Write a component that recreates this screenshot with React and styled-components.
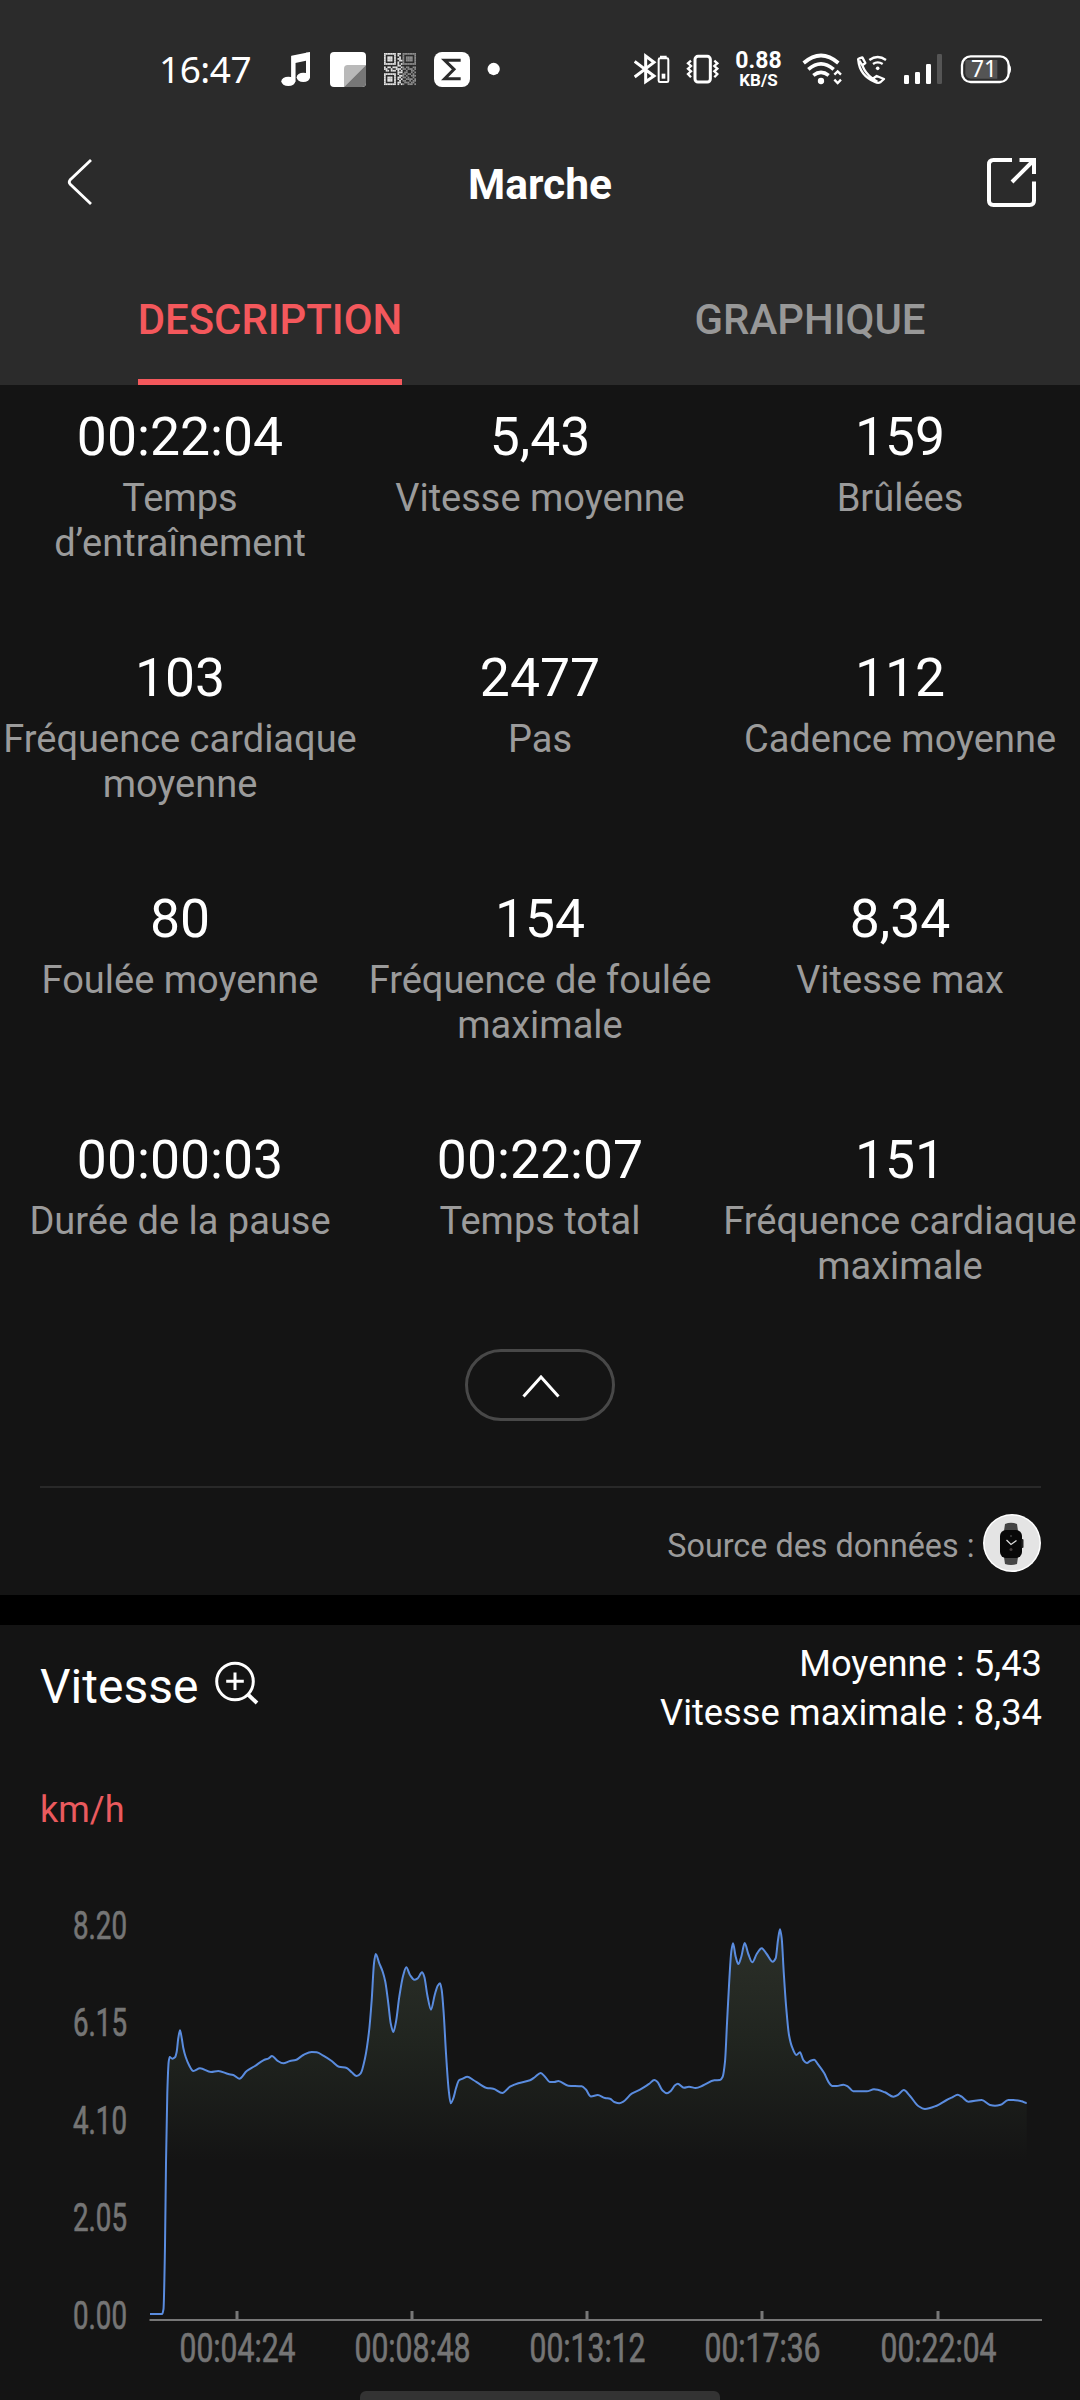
import React from "react";
import styled, { createGlobalStyle } from "styled-components";

const GlobalStyle = createGlobalStyle`
  html, body { margin: 0; padding: 0; background: #141414; }
  *, *::before, *::after { box-sizing: border-box; }
`;

const colors = {
  header: "#2b2b2b",
  body: "#141414",
  accent: "#f4585c",
  muted: "#9b9b9b",
  axis: "#757575",
};

const Screen = styled.div`
  width: 1080px;
  height: 2400px;
  overflow: hidden;
  display: flex;
  flex-direction: column;
  background: ${colors.body};
  color: #fff;
  font-family: Roboto, "Liberation Sans", sans-serif;
`;

const Header = styled.header`
  height: 385px;
  flex: none;
  display: flex;
  flex-direction: column;
  background: ${colors.header};
`;

const StatusBar = styled.div`
  height: 140px;
  padding: 50px 68px 50px 159px;
  display: flex;
  justify-content: space-between;
`;

const StatusGroup = styled.div`
  display: flex;
  height: 40px;
`;

const Clock = styled.div`
  width: 121px;
  font: 400 37px/38px "Noto Sans", "Open Sans", sans-serif;
  letter-spacing: -0.5px;
  white-space: nowrap;
`;

const StatusSvg = styled.svg`
  flex: none;
  display: block;
  height: 40px;
  margin-left: ${(p) => p.$before}px;
`;

const NetSpeed = styled.div`
  width: 49px;
  margin-left: 15px;
  display: flex;
  flex-direction: column;
  align-items: center;
  font-weight: 700;
  white-space: nowrap;
`;

const SpeedValue = styled.span`
  font-size: 23px;
  line-height: 22px;
`;

const SpeedUnit = styled.span`
  font-size: 17px;
  line-height: 16px;
`;

const TitleBar = styled.div`
  height: 90px;
  padding: 0 40px 0 64px;
  display: grid;
  grid-template-columns: 100px 1fr 100px;
  align-items: center;
`;

const Title = styled.h1`
  margin: 0;
  padding: 0 24px 0 0;
  text-align: center;
  font-size: 42.5px;
  line-height: 50px;
  font-weight: 700;
`;

const IconButton = styled.button`
  padding: 0 0 6px;
  border: 0;
  background: none;
  color: #fff;
  display: flex;
  justify-content: ${(p) => (p.$end ? "flex-end" : "flex-start")};
`;

const Tabs = styled.nav`
  flex: 1;
  display: grid;
  grid-template-columns: 1fr 1fr;
  justify-items: center;
`;

const Tab = styled.div`
  height: 155px;
  padding-top: 65px;
  font-size: 41.9px;
  line-height: 50px;
  font-weight: 500;
  color: ${(p) => (p.$active ? colors.accent : "#989898")};
  border-bottom: 6px solid ${(p) => (p.$active ? colors.accent : "transparent")};
`;

const Summary = styled.section`
  height: 1210px;
  flex: none;
  display: flex;
  flex-direction: column;
  align-items: center;
`;

const Stats = styled.div`
  width: 100%;
  padding-top: 20px;
  display: grid;
  grid-template-columns: repeat(3, 360px);
  grid-auto-rows: 241px;
`;

const Stat = styled.div`
  display: flex;
  flex-direction: column;
  align-items: center;
`;

const StatValue = styled.div`
  font-size: 53.5px;
  line-height: 64px;
`;

const StatLabel = styled.div`
  margin-top: 7px;
  font-size: 38px;
  line-height: 44.5px;
  color: ${colors.muted};
  text-align: center;
  white-space: pre;
`;

const Collapse = styled.button`
  flex: none;
  width: 150px;
  height: 72px;
  margin-top: -20px;
  padding: 2px 0 0 1px;
  border: 3px solid #484848;
  border-radius: 36px;
  background: none;
  color: #fff;
  display: flex;
  align-items: center;
  justify-content: center;
`;

const Source = styled.div`
  width: 1001px;
  height: 108px;
  margin-top: 65px;
  padding-top: 26px;
  border-top: 2px solid #292929;
  display: flex;
  justify-content: flex-end;
  align-items: flex-start;
`;

const SourceText = styled.span`
  padding-top: 12px;
  margin-right: 8px;
  font-size: 32.3px;
  line-height: 40px;
  color: ${colors.muted};
`;

const Separator = styled.div`
  height: 30px;
  flex: none;
  background: #000;
`;

const Speed = styled.section`
  height: 775px;
  flex: none;
  display: flex;
  flex-direction: column;
`;

const SpeedHead = styled.div`
  height: 160px;
  flex: none;
  padding: 14px 38px 0 40px;
  display: flex;
  justify-content: space-between;
`;

const SpeedTitle = styled.h2`
  margin: 0;
  padding-top: 18px;
  height: 78px;
  display: flex;
  gap: 16px;
  font-size: 48px;
  line-height: 60px;
  font-weight: 400;
`;

const MagnifySvg = styled.svg`
  display: block;
  margin-top: 4px;
`;

const SpeedFigures = styled.div`
  text-align: right;
  font-size: 36.3px;
  line-height: 49px;
`;

const Unit = styled.div`
  height: 95px;
  flex: none;
  padding-left: 40px;
  font-size: 36px;
  line-height: 50px;
  color: #ea5a5e;
`;

const ChartSvg = styled.svg`
  display: block;
  width: 1080px;
  height: 511px;
  flex: none;
`;

const AxisText = styled.text`
  fill: ${colors.axis};
  stroke: ${colors.axis};
  stroke-width: 0.7px;
  font-family: Roboto, sans-serif;
  font-size: ${(p) => p.$size}px;
`;

const HomeBar = styled.div`
  width: 360px;
  height: 9px;
  flex: none;
  align-self: center;
  border-radius: 6px 6px 0 0;
  background: #333;
`;

/* Status glyphs are drawn at three units per pixel. */
function Glyph({ x, w, before = 0, children }) {
  return (
    <StatusSvg $before={before} width={w / 3} viewBox={`${x} 60 ${w} 120`} fill="none">
      {children}
    </StatusSvg>
  );
}

const QR = [
  "1111111011011111111",
  "1000001010010000001",
  "1011101001010111101",
  "1011101011010111101",
  "1011101001110111101",
  "1000001010010000001",
  "1111111010111111111",
  "0000000011000000000",
  "1011011100110110011",
  "1100100111011011101",
  "0110111010100100110",
  "0000000011101100101",
  "1111111010011011010",
  "1000001001110100111",
  "1011101011011010010",
  "1011101010100111101",
  "1011101001011001011",
  "1000001011001110110",
  "1111111010110011101",
];

function QrGlyph() {
  const u = 96 / 19;
  return (
    <Glyph x={732} w={96} before={18}>
      {QR.flatMap((row, r) =>
        [...row].map((c, i) =>
          c === "1" ? (
            <rect
              key={`${r}-${i}`}
              x={732 + i * u}
              y={69 + r * u}
              width={u + 0.2}
              height={u + 0.2}
              fill={i > 10 ? "#8c8c8c" : "#e4e4e4"}
            />
          ) : null
        )
      )}
    </Glyph>
  );
}

function StatusIconsLeft() {
  return (
    <>
      <Glyph x={420} w={96}>
        <path d="M454 77 L510 66 V100 L498 92 L466 99 V154 H454 Z" fill="#fff" />
        <rect x="498" y="68" width="12" height="74" fill="#fff" />
        <rect x="454" y="78" width="12" height="76" fill="#fff" />
        <ellipse cx="445" cy="154" rx="21" ry="14" fill="#fff" />
        <ellipse cx="490" cy="142" rx="20" ry="14" fill="#fff" />
      </Glyph>
      <Glyph x={570} w={108} before={18}>
        <rect x="570" y="66" width="108" height="105" rx="12" fill="#fff" />
        <path d="M612 171 V116 Q612 105 623 105 H678 Z" fill="#b9b9b9" />
        <path d="M678 105 V159 Q678 171 666 171 H612 Z" fill="#777" />
      </Glyph>
      <QrGlyph />
      <Glyph x={882} w={108} before={18}>
        <rect x="882" y="66" width="108" height="105" rx="24" fill="#fff" />
        <path d="M962 91 H914 L942 118 L914 146 H962" stroke="#2b2b2b" strokeWidth="9" />
      </Glyph>
      <Glyph x={1042} w={42} before={17}>
        <circle cx="1062" cy="117" r="18.5" fill="#fff" />
      </Glyph>
    </>
  );
}

function StatusIconsRight() {
  return (
    <>
      <Glyph x={102} w={108}>
        <path d="M104 94 L162 138 L137 155 V78 L162 97 L104 141" stroke="#fff" strokeWidth="9" />
        <path d="M183 84 V80 H197 V84" stroke="#fff" strokeWidth="6" />
        <rect x="176" y="85" width="29" height="71" rx="4" stroke="#fff" strokeWidth="6" />
        <rect x="185" y="131" width="11" height="15" fill="#fff" />
      </Glyph>
      <Glyph x={258} w={99} before={16}>
        <rect x="285" y="79" width="46" height="77" rx="9" stroke="#fff" strokeWidth="9" />
        <path d="M273 92 L264 100 L273 108 L264 116 L273 124 L264 132 L273 142" stroke="#fff" strokeWidth="7" />
        <path d="M343 92 L352 100 L343 108 L352 116 L343 124 L352 132 L343 142" stroke="#fff" strokeWidth="7" />
      </Glyph>
      <NetSpeed>
        <SpeedValue>0.88</SpeedValue>
        <SpeedUnit>KB/S</SpeedUnit>
      </NetSpeed>
      <Glyph x={606} w={123} before={19}>
        <path d="M611 99 Q663 54 715 99" stroke="#fff" strokeWidth="11" />
        <path d="M625 118 Q663 85 701 118" stroke="#fff" strokeWidth="11" />
        <path d="M640 136 Q663 118 686 136" stroke="#fff" strokeWidth="11" />
        <circle cx="663" cy="153" r="9.5" fill="#fff" />
        <path d="M703 134 L713 124 L723 134 M703 149 L713 159 L723 149" stroke="#fff" strokeWidth="7" />
      </Glyph>
      <Glyph x={768} w={96} before={13}>
        <path
          d="M775 91 Q773 86 778 85 L787 82 L796 99 L787 106 Q796 130 818 146 L830 138 L852 147 L842 156 Q835 161 825 156 Q779 136 775 91 Z M818 146 L832 155 M787 106 L778 92"
          stroke="#fff"
          strokeWidth="7"
          strokeLinejoin="round"
        />
        <path d="M808 90 Q833 72 858 90" stroke="#fff" strokeWidth="7" />
        <path d="M819 102 Q833 92 848 102" stroke="#fff" strokeWidth="7" />
        <circle cx="833" cy="115" r="5.5" fill="#fff" />
      </Glyph>
      <Glyph x={909} w={120} before={15}>
        <rect x="912" y="135" width="15" height="27" rx="4" fill="#fff" />
        <rect x="945" y="126" width="15" height="36" rx="4" fill="#fff" />
        <rect x="978" y="102" width="15" height="60" rx="4" fill="#fff" />
        <rect x="1011" y="72" width="15" height="90" rx="4" fill="#555" />
      </Glyph>
      <Glyph x={1080} w={156} before={17}>
        <path d="M1096 90 H1192 V146 H1112 Q1096 144 1096 130 Z" fill="#545454" />
        <rect x="1086" y="79" width="140" height="77" rx="26" stroke="#fff" strokeWidth="7" />
        <path d="M1226 103 Q1233 106 1233 118 Q1233 130 1226 133 Z" fill="#fff" />
        <text x="1152" y="142" textAnchor="middle" fill="#fff" fontFamily="Noto Sans, sans-serif" fontSize="68">71</text>
      </Glyph>
    </>
  );
}

function BackIcon() {
  return (
    <svg width="32" height="50" viewBox="0 0 32 50" fill="none">
      <path d="M27 3 L6 23 Q4.500 25 6 27 L27 47" stroke="#fff" strokeWidth="2.800" />
    </svg>
  );
}

function ShareIcon() {
  return (
    <svg width="56" height="54" viewBox="0 0 56 54" fill="none" stroke="#fff" strokeWidth="4">
      <path d="M28 5 H9.500 Q5 5 5 9.500 V45.500 Q5 50 9.500 50 H45.500 Q50 50 50 45.500 V26.500" />
      <path d="M35.500 5 H50 V19 M49 6 L28 27" />
    </svg>
  );
}

function WatchBadge() {
  return (
    <svg width="58" height="58" viewBox="0 0 58 58">
      <circle cx="29" cy="29" r="29" fill="#fff" />
      <circle cx="29" cy="29" r="27.500" fill="#e4e4e4" />
      <path d="M22 10 Q28 7.500 34 10 L35 17 H21 Z M21 43 H35 L34 50 Q28 52 22 50 Z" fill="#444" />
      <rect x="17" y="16" width="22" height="28" rx="6" fill="#080808" />
      <rect x="38.500" y="25" width="2" height="9" rx="1" fill="#222" />
      <path d="M23.500 26 L28 30.500 L33.500 26.500" fill="none" stroke="#ddd" strokeWidth="1.300" />
      <circle cx="28" cy="35.500" r="1.500" fill="#443c3c" />
      <circle cx="28" cy="22" r="0.800" fill="#666" />
    </svg>
  );
}

function MagnifyIcon() {
  return (
    <MagnifySvg width="46" height="46" viewBox="0 0 46 46" fill="none" stroke="#fff">
      <circle cx="21" cy="20.500" r="18.300" strokeWidth="3" />
      <path d="M34 33.500 L43 42" strokeWidth="3.800" />
      <path d="M21 11.500 V29 M12.200 20.300 H29.800" strokeWidth="3" />
    </MagnifySvg>
  );
}

const stats = [
  ["00:22:04", "Temps\nd’entraînement"],
  ["5,43", "Vitesse moyenne"],
  ["159", "Brûlées"],
  ["103", "Fréquence cardiaque\nmoyenne"],
  ["2477", "Pas"],
  ["112", "Cadence moyenne"],
  ["80", "Foulée moyenne"],
  ["154", "Fréquence de foulée\nmaximale"],
  ["8,34", "Vitesse max"],
  ["00:00:03", "Durée de la pause"],
  ["00:22:07", "Temps total"],
  ["151", "Fréquence cardiaque\nmaximale"],
];

const points = [
  [150, 434], [162, 434], [163.5, 429], [165, 366], [166, 283], [167.3, 213], [168.7, 181.7], [169.7, 177],
  [172.3, 178.7], [175, 177.3], [176.7, 171.7], [178.3, 158], [180, 150.3], [181.7, 158], [183.3, 168],
  [185.7, 177], [189, 185], [193.3, 191], [200, 188.3], [211, 192], [218.3, 191], [228.3, 194], [233.3, 195],
  [239.3, 198.7], [246.7, 191], [255, 186], [263.3, 180.3], [268.7, 178.3], [272, 176], [277.3, 180.7],
  [283.3, 183.3], [290, 181], [295.7, 180], [303.3, 175], [311.7, 172], [316.7, 172.3], [323.3, 175.7],
  [331.7, 181], [339, 186.7], [346.7, 188], [351.7, 192.3], [356.7, 196], [360.7, 193.3], [365, 178.3],
  [369, 151.7], [371.7, 120], [374, 83.3], [375.7, 74], [379.3, 83.3], [382.7, 91.7], [385.3, 101.7],
  [388.3, 123.3], [390.7, 143.3], [393.3, 152], [396, 141.7], [399.3, 116.7], [403.3, 95], [406.3, 87.3],
  [410, 95], [414.3, 99.7], [417.7, 98.3], [422, 92.3], [424.3, 96.7], [427.3, 115], [431, 129.7],
  [434.7, 115], [437.7, 105.7], [440, 103.3], [441.7, 110], [443.7, 133.3], [446, 173.3], [448.7, 210],
  [450.7, 223.3], [453.3, 218.3], [456, 208.3], [459, 200.3], [462.7, 198.7], [467.3, 196.7], [473.3, 200],
  [480, 204.3], [486.7, 208], [493.3, 208.7], [502.3, 213], [510, 206.7], [518.3, 203.3], [530, 200.3],
  [535, 197], [540.7, 193], [545, 196.7], [550, 202], [554.3, 202], [558.3, 201], [568.3, 205.7],
  [581.7, 206.3], [585.7, 209.3], [591, 216.5], [597.7, 215], [605, 218], [610, 218.7], [614.3, 222],
  [619.3, 223.3], [623.3, 221.7], [631.7, 213.7], [640, 209.7], [649.3, 203.7], [654.3, 200], [657.3, 201.7],
  [662.3, 210.3], [667, 213.3], [671, 210.7], [675, 205.3], [677.7, 203.7], [684, 207.7], [689, 206.7],
  [695.7, 208], [703.3, 205.3], [714.3, 200.3], [720, 200], [722.7, 196.7], [725, 181.7], [727, 143.3],
  [729.3, 100], [731.3, 71.7], [733, 63.3], [735.7, 76.7], [738.3, 84], [741.3, 76.7], [744.7, 63],
  [748.3, 74], [752.3, 82.3], [756.7, 74], [761.7, 68.3], [766.7, 74], [772.7, 81.7], [775.7, 78.3],
  [778, 60], [780, 49.3], [781.7, 58.3], [783.7, 91.7], [786, 125], [789, 155], [792.3, 167.7], [796.3, 175],
  [800, 172.3], [803.3, 180], [807, 183], [810, 181], [814.3, 179.7], [817.3, 183.3], [824.3, 193.3],
  [828.3, 201.7], [832.3, 206], [836.7, 206], [843.3, 204.7], [847.7, 206.3], [853.3, 211.3], [866.7, 211.3],
  [874, 209.3], [885, 212.3], [893.3, 216.7], [898.3, 214.7], [903.7, 210], [910, 216], [918.3, 226],
  [925, 229], [936.7, 225.7], [946.7, 220], [952.3, 217.3], [957.7, 214.7], [961.7, 216.7], [968.3, 221.7],
  [981.7, 220], [990, 225], [995, 225.7], [1000.7, 224.7], [1008.3, 220], [1013.3, 220], [1021.7, 221.3],
  [1026.7, 223],
];

/* Monotone cubic interpolation through the samples. */
function smoothPath(pts) {
  const slope = pts.slice(1).map((p, i) => (p[1] - pts[i][1]) / (p[0] - pts[i][0]));
  const tangent = pts.map((_, i) => {
    if (i === 0 || i === pts.length - 1) return 0;
    const a = slope[i - 1];
    const b = slope[i];
    return a * b <= 0 ? 0 : (2 * a * b) / (a + b);
  });
  return pts.slice(1).reduce((d, p, i) => {
    const q = pts[i];
    const h = (p[0] - q[0]) / 3;
    return `${d} C${q[0] + h} ${q[1] + tangent[i] * h} ${p[0] - h} ${p[1] - tangent[i + 1] * h} ${p[0]} ${p[1]}`;
  }, `M${pts[0][0]} ${pts[0][1]}`);
}

const yTicks = ["8.20", "6.15", "4.10", "2.05", "0.00"];
const xTicks = [
  [237, "00:04:24"],
  [412, "00:08:48"],
  [587, "00:13:12"],
  [762, "00:17:36"],
  [938, "00:22:04"],
];

function SpeedChart() {
  const line = smoothPath(points);
  return (
    <ChartSvg viewBox="0 0 1080 511">
      <defs>
        <linearGradient id="area" gradientUnits="userSpaceOnUse" x1="0" y1="50" x2="0" y2="280">
          <stop offset="0" stopColor="#2c3029" />
          <stop offset="0.500" stopColor="#20241f" />
          <stop offset="1" stopColor="#141414" />
        </linearGradient>
      </defs>
      <path d={`${line} V434 H150 Z`} fill="url(#area)" />
      <path d={line} fill="none" stroke="#5a8cdf" strokeWidth="2" strokeLinejoin="round" />
      <path d="M149.500 440 H1042" stroke="#777" strokeWidth="2" />
      {yTicks.map((t, i) => (
        <AxisText key={t} $size={39.5} x="73" y={59 + i * 97.4} textLength="54" lengthAdjust="spacingAndGlyphs">
          {t}
        </AxisText>
      ))}
      {xTicks.map(([x, t]) => (
        <React.Fragment key={t}>
          <path d={`M${x} 431 V440`} stroke="#777" strokeWidth="3" />
          <AxisText $size={40.5} x={x - 57.5} y="481.500" textLength="116" lengthAdjust="spacingAndGlyphs">
            {t}
          </AxisText>
        </React.Fragment>
      ))}
    </ChartSvg>
  );
}

export default function App() {
  return (
    <Screen>
      <GlobalStyle />
      <Header>
        <StatusBar>
          <StatusGroup>
            <Clock>16:47</Clock>
            <StatusIconsLeft />
          </StatusGroup>
          <StatusGroup>
            <StatusIconsRight />
          </StatusGroup>
        </StatusBar>
        <TitleBar>
          <IconButton aria-label="Retour">
            <BackIcon />
          </IconButton>
          <Title>Marche</Title>
          <IconButton aria-label="Partager" $end>
            <ShareIcon />
          </IconButton>
        </TitleBar>
        <Tabs>
          <Tab $active>DESCRIPTION</Tab>
          <Tab>GRAPHIQUE</Tab>
        </Tabs>
      </Header>
      <Summary>
        <Stats>
          {stats.map(([value, label], i) => (
            <Stat key={i}>
              <StatValue>{value}</StatValue>
              <StatLabel>{label}</StatLabel>
            </Stat>
          ))}
        </Stats>
        <Collapse aria-label="Réduire">
          <svg width="38" height="24" viewBox="0 0 38 24" fill="none">
            <path d="M1.500 22.500 L19 3 L36.500 22.500" stroke="#fff" strokeWidth="3" />
          </svg>
        </Collapse>
        <Source>
          <SourceText>Source des données :</SourceText>
          <WatchBadge />
        </Source>
      </Summary>
      <Separator />
      <Speed>
        <SpeedHead>
          <SpeedTitle>
            Vitesse
            <MagnifyIcon />
          </SpeedTitle>
          <SpeedFigures>
            <div>Moyenne : 5,43</div>
            <div>Vitesse maximale : 8,34</div>
          </SpeedFigures>
        </SpeedHead>
        <Unit>km/h</Unit>
        <SpeedChart />
        <HomeBar />
      </Speed>
    </Screen>
  );
}
